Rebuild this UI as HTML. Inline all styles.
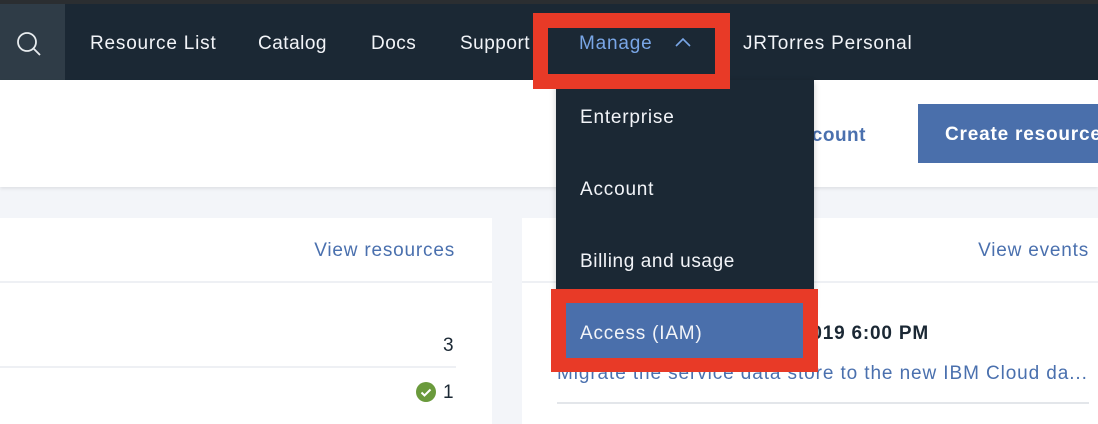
<!DOCTYPE html>
<html><head><style>
*{margin:0;padding:0;box-sizing:border-box}
body{width:1098px;height:424px;overflow:hidden;background:#f3f5f9;font-family:"Liberation Sans",sans-serif;position:relative}
.a{position:absolute}
.t{position:absolute;white-space:nowrap;line-height:1;letter-spacing:0.5px}
</style></head><body>
<div class="a" style="left:0;top:0;width:1098px;height:4px;background:#2b2e31"></div>
<div class="a" style="left:0;top:4px;width:1098px;height:76px;background:#1b2834"></div>
<div class="a" style="left:0;top:4px;width:65px;height:76px;background:#2f3c47"></div>
<svg class="a" style="left:15px;top:30px" width="28" height="28" viewBox="0 0 28 28"><circle cx="12" cy="12" r="9" fill="none" stroke="#e8ecef" stroke-width="1.8"/><path d="M18.5 18.5L25 25" stroke="#e8ecef" stroke-width="1.8"/></svg>
<div class="t" style="left:90px;top:34px;font-size:19px;color:#f2f4f8;letter-spacing:0.8px">Resource List</div>
<div class="t" style="left:258px;top:34px;font-size:19px;color:#f2f4f8">Catalog</div>
<div class="t" style="left:371px;top:34px;font-size:19px;color:#f2f4f8">Docs</div>
<div class="t" style="left:460px;top:34px;font-size:19px;color:#f2f4f8">Support</div>
<div class="t" style="left:743px;top:34px;font-size:19px;color:#f2f4f8;letter-spacing:0.8px">JRTorres Personal</div>
<div class="a" style="left:0;top:80px;width:1098px;height:107px;background:#fff;box-shadow:0 2px 3px rgba(0,0,0,.08)"></div>
<div class="t" style="right:232px;top:126px;font-size:19px;font-weight:bold;color:#4a70ae">count</div>
<div class="a" style="left:918px;top:104px;width:180px;height:59px;background:#4a6fab"></div>
<div class="t" style="left:945px;top:125px;font-size:19px;font-weight:bold;color:#fff;letter-spacing:0.8px">Create resource</div>
<div class="a" style="left:0;top:218px;width:492px;height:206px;background:#fff"></div>
<div class="a" style="left:0;top:281px;width:492px;height:2px;background:#eef0f4"></div>
<div class="t" style="right:643px;top:241px;font-size:19px;color:#4a70ae;letter-spacing:0.8px">View resources</div>
<div class="t" style="left:443px;top:336px;font-size:19px;color:#1b2834">3</div>
<div class="a" style="left:0;top:366px;width:456px;height:2px;background:#eef0f4"></div>
<svg class="a" style="left:416px;top:382px" width="20" height="20" viewBox="0 0 20 20"><circle cx="10" cy="10" r="10" fill="#6a9a3c"/><path d="M5.5 10.5l3 3 6-6" fill="none" stroke="#fff" stroke-width="2"/></svg>
<div class="t" style="left:443px;top:383px;font-size:19px;color:#1b2834">1</div>
<div class="a" style="left:522px;top:218px;width:576px;height:206px;background:#fff"></div>
<div class="a" style="left:522px;top:281px;width:576px;height:2px;background:#eef0f4"></div>
<div class="t" style="right:9px;top:241px;font-size:19px;color:#4a70ae;letter-spacing:0.8px">View events</div>
<div class="t" style="left:800px;top:324px;font-size:19px;font-weight:bold;color:#1b2834;letter-spacing:0.8px">2019 6:00 PM</div>
<div class="t" style="left:557px;top:364px;font-size:19px;color:#4a70ae;letter-spacing:0.9px">Migrate the service data store to the new IBM Cloud da...</div>
<div class="a" style="left:557px;top:402px;width:532px;height:2px;background:#e3e6ea"></div>
<div class="a" style="left:556px;top:80px;width:258px;height:230px;background:#1b2834;box-shadow:0 2px 6px rgba(0,0,0,.2)"></div>
<div class="t" style="left:580px;top:108px;font-size:19px;color:#f2f4f8;letter-spacing:0.8px">Enterprise</div>
<div class="t" style="left:580px;top:180px;font-size:19px;color:#f2f4f8;letter-spacing:0.8px">Account</div>
<div class="t" style="left:580px;top:252px;font-size:19px;color:#f2f4f8;letter-spacing:0.6px">Billing and usage</div>
<div class="a" style="left:551px;top:289px;width:267px;height:83px;background:#e83a27"></div>
<div class="a" style="left:566px;top:303px;width:237px;height:55px;background:#4a6fab"></div>
<div class="t" style="left:580px;top:324px;font-size:19px;color:#f2f4f8;letter-spacing:0.8px">Access (IAM)</div>
<div class="a" style="left:533px;top:13px;width:197px;height:76px;background:#e83a27"></div>
<div class="a" style="left:548px;top:28px;width:167px;height:46px;background:#1b2834"></div>
<div class="t" style="left:579px;top:34px;font-size:19px;color:#79a6e6;letter-spacing:0.8px">Manage</div>
<svg class="a" style="left:674px;top:36px" width="18" height="12" viewBox="0 0 18 12"><path d="M2 10L9 3l7 7" fill="none" stroke="#79a6e6" stroke-width="1.6"/></svg>
</body></html>
